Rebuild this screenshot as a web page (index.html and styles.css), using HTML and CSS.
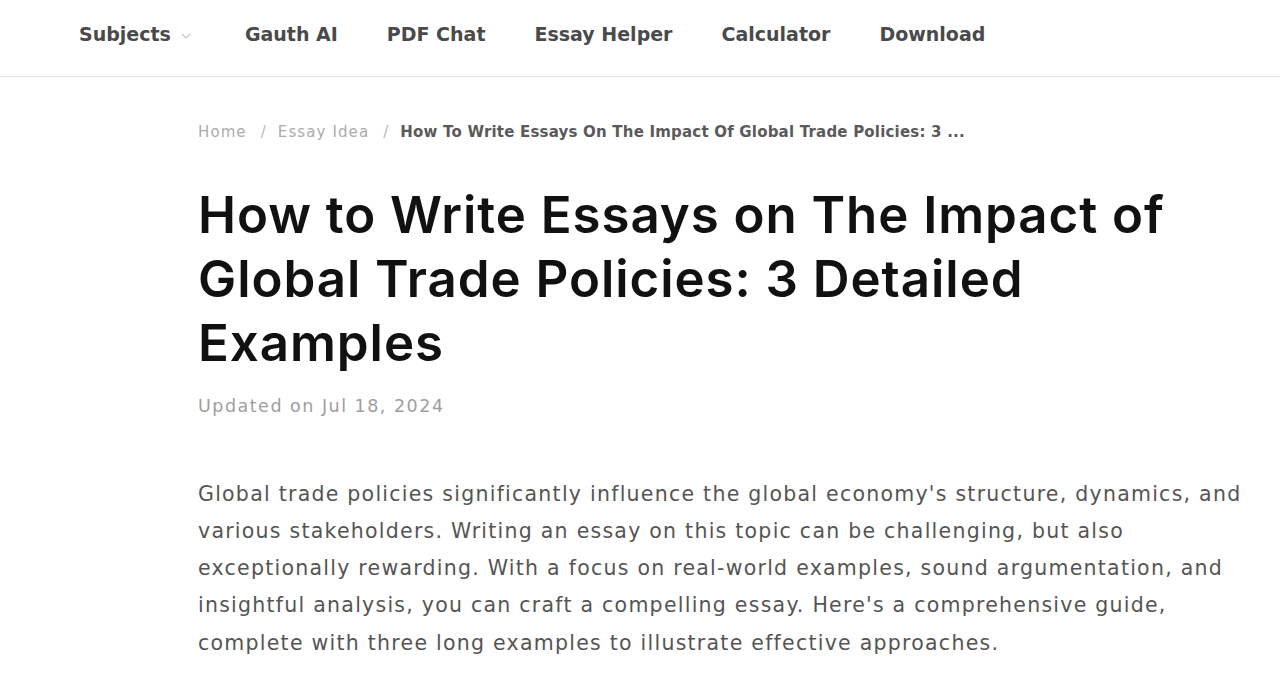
FILE: index.html
```html
<!DOCTYPE html>
<html lang="en">
<head>
<meta charset="utf-8">
<title>How to Write Essays on The Impact of Global Trade Policies</title>
<link rel="stylesheet" href="styles.css">
</head>
<body>
<header class="topbar">
  <nav class="nav">
    <a class="nav-item" href="#">Subjects<svg class="caret" width="10" height="6" viewBox="0 0 10 6"><path d="M1 1l4 4 4-4" fill="none" stroke="#c2c2c2" stroke-width="1.1"/></svg></a>
    <a class="nav-item" href="#">Gauth AI</a>
    <a class="nav-item" href="#">PDF Chat</a>
    <a class="nav-item" href="#">Essay Helper</a>
    <a class="nav-item" href="#">Calculator</a>
    <a class="nav-item" href="#">Download</a>
  </nav>
</header>
<main class="article">
  <div class="breadcrumb">
    <a class="crumb" href="#">Home</a><span class="sep">/</span><a class="crumb" href="#">Essay Idea</a><span class="sep">/</span><span class="current">How To Write Essays On The Impact Of Global Trade Policies: 3 ...</span>
  </div>
  <h1 class="title">How to Write Essays on The Impact of Global Trade Policies: 3 Detailed Examples</h1>
  <div class="updated">Updated on Jul 18, 2024</div>
  <p class="intro">Global trade policies significantly influence the global economy's structure, dynamics, and various stakeholders. Writing an essay on this topic can be challenging, but also exceptionally rewarding. With a focus on real-world examples, sound argumentation, and insightful analysis, you can craft a compelling essay. Here's a comprehensive guide, complete with three long examples to illustrate effective approaches.</p>
</main>
</body>
</html>
```
FILE: styles.css
```css
* { box-sizing: border-box; }
html, body { margin: 0; padding: 0; background: #fff; }
body { font-family: "DejaVu Sans", "Noto Sans", sans-serif; color: #111; }
a { text-decoration: none; color: inherit; }

.topbar {
  height: 77px;
  border-bottom: 1px solid #e4e4e4;
}
.nav {
  display: flex;
  align-items: center;
  height: 100%;
  padding-left: 79px;
  padding-bottom: 8px;
  gap: 49px;
}
.nav-item {
  font-size: 19px;
  font-weight: 700;
  color: #4a4a4a;
  display: flex;
  align-items: center;
}
.caret { margin-left: 10px; margin-right: 5px; margin-top: 3px; }

.article {
  padding-left: 198px;
  width: 1248px;
}
.breadcrumb {
  margin-top: 45px;
  font-size: 15px;
  line-height: 20px;
  letter-spacing: 1.1px;
  color: #ababab;
  white-space: nowrap;
}
.breadcrumb .sep { margin: 0 11px 0 14px; color: #b8b8b8; }
.breadcrumb .current { color: #5a5a5a; font-weight: 700; letter-spacing: 0.2px; font-size: 15px; }

.title {
  margin: 41px 0 0;
  font-family: Inter, "DejaVu Sans", sans-serif;
  font-size: 51px;
  line-height: 64px;
  font-weight: 600;
  letter-spacing: 0.95px;
  color: #111;
}
.updated {
  margin-top: 18.5px;
  font-size: 17.5px;
  line-height: 24px;
  letter-spacing: 1.5px;
  color: #9e9e9e;
}
.intro {
  margin: 58px 0 0;
  font-size: 20.5px;
  line-height: 37.25px;
  letter-spacing: 1.25px;
  color: #555;
}
```
